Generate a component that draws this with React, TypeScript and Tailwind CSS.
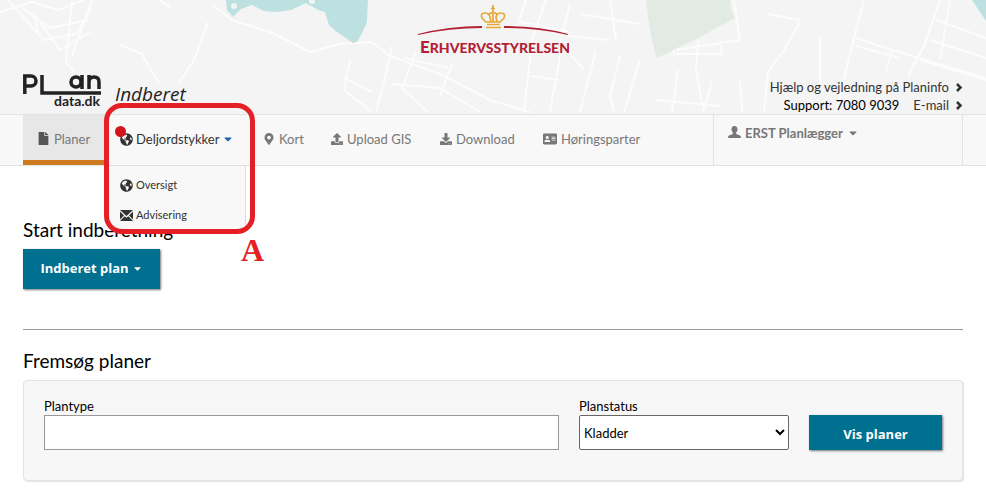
import { FaFile, FaGlobeAmericas, FaMapMarkerAlt, FaUpload, FaDownload, FaAddressCard, FaCaretDown } from "react-icons/fa"

const ROADS = [
  "M0 12 32 2 58 10 84 0M8 0 44 40 76 34 92 8M40 22 60 50 90 32M72 0 66 62 74 72M20 6 50 28 88 20M34 12 38 32",
  "M92 0 72 56M120 45 142 54 152 72 160 84M160 0 170 8M208 22 194 60 178 84M214 6 232 20 270 32 310 52 340 44 372 42",
  "M372 42 390 56 440 74 490 100 530 112M350 60 344 90 372 112M344 78 372 92M392 46 384 82 376 112M416 52 402 88 428 112",
  "M404 58 448 68M392 84 440 88 480 112M452 64 440 96M526 0 516 30M546 0 532 40 524 112M570 4 560 42 584 70M610 0 616 40",
  "M520 22 570 32M560 56 550 112M530 76 560 80M596 50 580 112M620 56 610 96 614 112M640 60 624 112M580 14 640 24M566 36 610 40",
  "M676 50 740 40 734 0M698 40 696 70 704 112M674 50 674 56M720 40 722 54 676 54M800 22 784 50 768 72 764 112M820 36V84",
  "M864 0 852 46 836 112M856 38 892 50 986 78M940 0 924 46 908 76M892 50 886 72M936 20 986 38M930 40 986 58M920 60 986 80",
  "M856 46 900 58M950 0 940 60M678 70 672 112M712 80 704 112M740 80 742 112M656 100 720 106M768 14 800 20",
]

const NAV = [
  { label: "Kort", icon: FaMapMarkerAlt, size: 12, width: "w-[68px]" },
  { label: "Upload GIS", icon: FaUpload, size: 12, width: "w-[109px]" },
  { label: "Download", icon: FaDownload, size: 12, width: "w-[103px]" },
  { label: "Høringsparter", icon: FaAddressCard, size: 14, width: "w-[120px]" },
]

function MapBackground() {
  return (
    <svg className="absolute inset-0 h-full w-full" viewBox="0 0 986 114" preserveAspectRatio="xMidYMin slice" aria-hidden="true">
      <g fill="none" stroke="#fcfcfc" strokeWidth="2" strokeLinejoin="round">
        {ROADS.map((d) => <path key={d} d={d} />)}
      </g>
      <path fill="#bce1e0" d="M226 0H368L367 22Q362 34 357 42L353 43 337 32 329 25 325 12 318 10 313 7 306 3 291 10 276 12 264 11 252 5 241 9 233 17 227 10Z" />
      <path fill="#e1ebe4" d="M646 0H730Q730 10 735 18L698 38 657 58Q650 38 646 0Z" />
      <path fill="#bce1e0" d="M972 0H986V21Z" />
      <circle cx="234" cy="6" r="3" fill="#f4f4f4" />
      <circle cx="312" cy="1" r="3" fill="#f4f4f4" />
    </svg>
  )
}

function AgencyLogo() {
  return (
    <svg className="absolute left-1/2 top-1 w-[152px] -translate-x-1/2" viewBox="0 0 152 60" role="img" aria-label="Erhvervsstyrelsen">
      <path fill="#b31f34" d="M1 30Q32 22 65 22V24Q32 24 1 31ZM87 22Q122 22 151 30V31Q122 24 87 24Z" />
      <g fill="none" stroke="#e8a735" strokeWidth="1.700">
        <path d="M69 18 65 14Q63 9 68 9 72 9 73 13L74 18M83 18 87 14Q89 9 84 9 80 9 79 13L80 18M72 11Q73 8 76 9V18M80 11Q79 8 76 9M68 18H84M70 20.500H83M69 23.500H84" />
        <path d="M76 1V8M74 4.500H78" />
      </g>
      <text x="3" y="49" fill="#b31f34" fontFamily="Lato" fontWeight="900" fontSize="17">E<tspan fontSize="14">RHVERVSSTYRELSEN</tspan></text>
    </svg>
  )
}

function PlanLogo() {
  return (
    <svg className="h-[38px] w-[80px]" viewBox="0 0 80 38" role="img" aria-label="Plandata.dk">
      <g fill="none" stroke="#222" strokeWidth="3.5">
        <path d="M1.800 22V4H8a4.500 4.500 0 0 1 0 10H2M19 3V21H78" />
        <circle cx="53" cy="10" r="5" />
        <path d="M59 3V17M66 17V3M66 10Q66 5 71 5 76 5 76 10V17" />
      </g>
      <text x="31" y="34" fill="#222" fontFamily="Lato" fontWeight="700" fontSize="14">data.dk</text>
    </svg>
  )
}

function Envelope() {
  return (
    <svg className="h-[11px] w-[13px]" viewBox="0 0 13 11" fill="currentColor" aria-hidden="true">
      <path d="M0 0H13L6.500 6ZM0 1.500 4 5.500 0 9.500ZM13 1.500 9 5.500 13 9.500ZM4.700 6.200 6.500 7.800 8.300 6.200 13 11H0Z" />
    </svg>
  )
}

function Person() {
  return (
    <svg className="mt-0.5 h-3 w-[13px]" viewBox="0 0 13 12" fill="currentColor" aria-hidden="true">
      <path d="M6.500 0C8.500 0 9.600 1.300 9.500 3.300 9.400 5 8.700 6 8.200 6.600V8L12 9.600Q13 10 13 12H0Q0 10 1 9.600L4.800 8V6.600C4.300 6 3.600 5 3.500 3.300 3.400 1.300 4.500 0 6.500 0Z" />
    </svg>
  )
}

function Chevron() {
  return (
    <svg className="h-[9px] w-2" viewBox="0 0 8 9" fill="none" stroke="currentColor" strokeWidth="2.5" aria-hidden="true">
      <path d="M2 1 5.500 4.500 2 8" />
    </svg>
  )
}

export default function App() {
  return (
    <div className="bg-white font-[Lato,sans-serif] text-[13px] leading-[18px] text-black">
      <header className="relative h-[114px] bg-[#f4f4f4]">
        <MapBackground />
        <AgencyLogo />
        <div className="relative flex h-full items-end justify-between px-[23px]">
          <div className="flex items-end gap-3 pb-1">
            <PlanLogo />
            <span className="pb-1 font-['Open_Sans',sans-serif] text-[19px] italic leading-6 text-[#222]">Indberet</span>
          </div>
          <div className="text-right">
            <a href="#" className="flex items-center justify-end gap-1.5 text-[#333]">Hjælp og vejledning på Planinfo <Chevron /></a>
            <div className="flex items-center justify-end gap-3.5">
              <span>Support: 7080 9039</span>
              <a href="#" className="flex items-center gap-1.5 text-[#333]">E-mail <Chevron /></a>
            </div>
          </div>
        </div>
      </header>

      <nav className="flex h-[52px] border-y border-[#e3e3e3] bg-[#f8f8f8] px-[23px] text-[#777]">
        <a href="#" className="flex w-[82px] items-center gap-1 border-b-[5px] border-[#ce7a1e] bg-[#e7e7e7] pl-3.5 pt-0.5"><FaFile size={13} className="text-[#555]" />Planer</a>
        <div className="relative w-[145px]">
          <button type="button" className="flex h-full items-center gap-[3px] pb-0.5 pl-[15px] text-[#333]">
            <FaGlobeAmericas size={13} />Deljordstykker<FaCaretDown size={12} className="text-[#1b62ab]" />
          </button>
          <span className="absolute left-[10px] top-[11px] size-[11px] rounded-full bg-[#d2141b]" />
          <div className="absolute left-0 top-[50px] w-[141px] border-r border-t border-[#ddd] bg-[#f8f8f8] pl-[15px] pt-1 text-[11px] text-[#333]">
            <a href="#" className="flex h-[30px] items-center gap-[3px]"><FaGlobeAmericas size={13} />Oversigt</a>
            <a href="#" className="flex h-[30px] items-center gap-[3px]"><Envelope />Advisering</a>
          </div>
          <div className="pointer-events-none absolute -left-px -top-[12px] h-[131px] w-[151px] rounded-[18px] border-[5px] border-[#e41f26]" />
          <span className="absolute left-[136px] top-[118px] font-['Liberation_Serif',serif] text-[32px] font-bold leading-[34px] text-[#e41f26]">A</span>
        </div>
        <div className="flex flex-1 items-center pb-0.5 pl-[13px]">
          {NAV.map(({ label, icon: Icon, size, width }) => (
            <a key={label} href="#" className={`flex items-center gap-1 ${width}`}><Icon size={size} />{label}</a>
          ))}
        </div>
        <button type="button" className="flex w-[250px] items-start gap-1 border-x border-[#e3e3e3] pl-3.5 pt-[9px] font-bold"><Person />ERST Planlægger<FaCaretDown size={12} className="mt-[3px]" /></button>
      </nav>

      <main className="px-[23px] pb-3 pt-[52px]">
        <h2 className="text-[19px] leading-6">Start indberetning</h2>
        <button type="button" className="mt-[7px] flex h-10 w-[137px] items-center justify-center gap-[3px] bg-[#007090] pb-0.5 font-['Open_Sans',sans-serif] font-bold text-white shadow-[1px_1px_2px_#777]">Indberet plan<FaCaretDown size={11} /></button>
        <hr className="mt-10 border-[#999]" />
        <h2 className="mt-[19px] text-[19px] leading-6">Fremsøg planer</h2>
        <form className="mt-[7px] flex gap-5 rounded-sm border border-[#e3e3e3] bg-[#f7f7f7] px-5 pb-[30px] pt-4 shadow-[1px_1px_1px_#e5e5e5]">
          <label className="flex-1">Plantype<input type="text" className="block h-[35px] w-full border border-[#999] bg-white px-2" /></label>
          <label className="w-[210px]">Planstatus
            <select className="block h-[35px] w-full rounded-[2px] border border-[#666] bg-white"><option>Kladder</option></select>
          </label>
          <button type="button" className="mt-[18px] h-[35px] w-[133px] bg-[#007090] pt-0.5 font-['Open_Sans',sans-serif] font-bold text-white shadow-[1px_1px_2px_#777]">Vis planer</button>
        </form>
      </main>
    </div>
  )
}
